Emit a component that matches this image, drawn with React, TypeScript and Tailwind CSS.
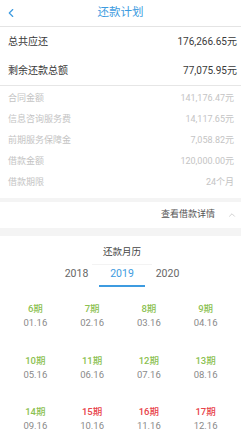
import { ChevronLeft, ChevronUp } from "lucide-react";

const summary = [
  { label: "总共应还", value: "176,266.65元" },
  { label: "剩余还款总额", value: "77,075.95元" },
];

const details = [
  { label: "合同金额", value: "141,176.47元" },
  { label: "信息咨询服务费", value: "14,117.65元" },
  { label: "前期服务保障金", value: "7,058.82元" },
  { label: "借款金额", value: "120,000.00元" },
  { label: "借款期限", value: "24个月" },
];

const periods = [
  { n: 6, date: "01.16", due: false },
  { n: 7, date: "02.16", due: false },
  { n: 8, date: "03.16", due: false },
  { n: 9, date: "04.16", due: false },
  { n: 10, date: "05.16", due: false },
  { n: 11, date: "06.16", due: false },
  { n: 12, date: "07.16", due: false },
  { n: 13, date: "08.16", due: false },
  { n: 14, date: "09.16", due: false },
  { n: 15, date: "10.16", due: true },
  { n: 16, date: "11.16", due: true },
  { n: 17, date: "12.16", due: true },
];

function App() {
  return (
    <div
      className="w-[241px] h-[433px] overflow-hidden bg-white"
      style={{ fontFamily: "Roboto, 'Noto Sans CJK SC', sans-serif" }}
    >
      {/* Header */}
      <div className="relative h-[27px] flex items-center justify-center border-b border-[#e4e4e4]">
        <ChevronLeft className="absolute left-[4px] top-[6px] w-[14px] h-[14px] text-[#3d9be0]" strokeWidth={2} />
        <span className="text-[11.5px] text-[#3d9be0]">还款计划</span>
      </div>

      {/* Summary */}
      <div className="border-b border-[#e6e6e6]">
        {summary.map((row) => (
          <div key={row.label} className="h-[29px] flex items-center justify-between pl-[8px] pr-[4px] text-[10px] text-[#3a3a3a]">
            <span>{row.label}</span>
            <span>{row.value}</span>
          </div>
        ))}
      </div>

      {/* Details */}
      <div className="pt-[2px] pb-[5px]">
        {details.map((row) => (
          <div key={row.label} className="h-[21px] flex items-center justify-between pl-[8px] pr-[7px] text-[9px] text-[#c4c4c4]">
            <span>{row.label}</span>
            <span>{row.value}</span>
          </div>
        ))}
      </div>

      <div className="h-[4px] bg-[#f4f4f4]" />

      <div className="h-[26px] flex items-center justify-end gap-[12px] pr-[4px] text-[9px] text-[#555]">
        <span>查看借款详情</span>
        <ChevronUp className="w-[10px] h-[10px] text-[#c8c8c8]" strokeWidth={2} />
      </div>

      <div className="h-[8px] bg-[#f4f4f4]" />

      {/* Calendar */}
      <div className="flex flex-col items-center pl-[3px]">
        <div className="h-[28px] pt-[9px] text-[9.5px] text-[#444]">还款月历</div>
        <div className="w-[60px] h-px bg-[#f3f3f3]" />
        <div className="flex items-end h-[22px]">
          <span className="w-[45px] text-center text-[10.5px] text-[#666] pb-[5px]">2018</span>
          <span className="w-[46px] text-center text-[10.5px] text-[#3d9be0] pb-[3px] border-b-2 border-[#3d9be0]">2019</span>
          <span className="w-[45px] text-center text-[10.5px] text-[#666] pb-[5px]">2020</span>
        </div>
      </div>

      <div className="grid grid-cols-4 px-[7px] pt-[15px]">
        {periods.map((p) => (
          <div key={p.n} className="h-[51.5px] flex flex-col items-center">
            <span className={`h-[14px] leading-[14px] text-[9.5px] font-medium ${p.due ? "text-[#e8434a]" : "text-[#8cc152]"}`}>
              {p.n}期
            </span>
            <span className="h-[14px] leading-[14px] text-[9.5px] text-[#8a8a8a]">{p.date}</span>
          </div>
        ))}
      </div>
    </div>
  );
}

export default App;
